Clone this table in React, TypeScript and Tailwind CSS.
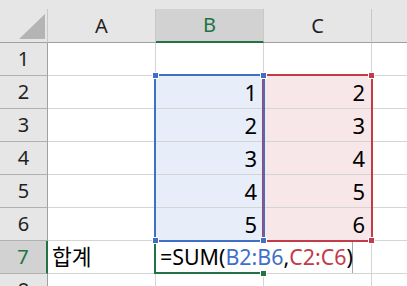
import React from 'react';

const cols = ['A', 'B', 'C'];
const rowNums = [1, 2, 3, 4, 5, 6, 7, 8];

const colB: Record<number, number> = { 2: 1, 3: 2, 4: 3, 5: 4, 6: 5 };
const colC: Record<number, number> = { 2: 2, 3: 3, 4: 4, 5: 5, 6: 6 };

const Handle = ({ x, y, color }: { x: number; y: number; color: string }) => (
  <div
    className="absolute h-[7px] w-[7px] border border-white"
    style={{ left: x, top: y, backgroundColor: color }}
  />
);

const App: React.FC = () => {
  return (
    <div
      className="relative h-[286px] w-[407px] overflow-hidden bg-white text-black"
      style={{ fontFamily: '"Noto Sans", "Noto Sans CJK KR", sans-serif' }}
    >
      <div className="h-[9px] bg-[#e6e6e6]" />

      {/* column headers */}
      <div className="flex h-[34px] bg-[#e6e6e6] text-[20px] text-[#1f1f1f]">
        <div className="flex w-[48px] shrink-0 items-end justify-end border-r border-b border-r-[#c8c8c8] border-b-[#a0a0a0] pr-[2px] pb-[3px]">
          <svg width="26" height="25" viewBox="0 0 26 25">
            <polygon points="0,25 26,25 26,0" fill="#b4b4b4" />
          </svg>
        </div>
        {cols.map((c) =>
          c === 'B' ? (
            <div
              key={c}
              className="flex w-[108px] shrink-0 items-center justify-center border-r border-b-2 border-r-[#c8c8c8] border-b-[#217346] bg-[#d2d2d2] text-[#217346]"
            >
              {c}
            </div>
          ) : (
            <div
              key={c}
              className="flex w-[108px] shrink-0 items-center justify-center border-r border-b border-r-[#c8c8c8] border-b-[#a0a0a0]"
            >
              {c}
            </div>
          )
        )}
        <div className="flex-1 border-b border-b-[#a0a0a0]" />
      </div>

      {/* grid rows */}
      {rowNums.map((r) => {
        const active = r === 7;
        const inRange = r >= 2 && r <= 6;
        return (
          <div key={r} className="flex h-[33px]">
            <div
              className={
                active
                  ? 'flex w-[48px] shrink-0 items-center justify-center border-r-2 border-b border-r-[#217346] border-b-[#b0b0b0] bg-[#d2d2d2] text-[20px] text-[#217346]'
                  : 'flex w-[48px] shrink-0 items-center justify-center border-r border-b border-r-[#a0a0a0] border-b-[#b0b0b0] bg-[#e6e6e6] text-[20px] text-[#1f1f1f]'
              }
            >
              {r}
            </div>
            <div className="flex w-[108px] shrink-0 items-center border-r border-b border-[#d4d4d4] pl-[4px] text-[21.5px]">
              {active ? '합계' : ''}
            </div>
            <div
              className={
                inRange
                  ? 'flex w-[108px] shrink-0 items-center justify-end border-r border-b border-[#d4d4d4] bg-[#e8eef9] pr-[6px] text-[22px]'
                  : 'flex w-[108px] shrink-0 items-center justify-end border-r border-b border-[#d4d4d4] pr-[6px] text-[22px]'
              }
            >
              {colB[r] ?? ''}
            </div>
            <div
              className={
                inRange
                  ? 'flex w-[108px] shrink-0 items-center justify-end border-r border-b border-[#d4d4d4] bg-[#f8e7e8] pr-[6px] text-[22px]'
                  : 'flex w-[108px] shrink-0 items-center justify-end border-r border-b border-[#d4d4d4] pr-[6px] text-[22px]'
              }
            >
              {colC[r] ?? ''}
            </div>
            <div className="flex-1 border-b border-[#d4d4d4]" />
          </div>
        );
      })}

      {/* formula being edited in B7 */}
      <div className="absolute top-[241px] left-[156px] flex h-[32px] w-[197px] items-center border-r border-[#a6a6a6] bg-white pl-[4px] text-[21.4px] whitespace-nowrap">
        <span>=SUM(</span>
        <span className="text-[#3f6fc6]">B2:B6</span>
        <span>,</span>
        <span className="text-[#c33a48]">C2:C6</span>
        <span>)</span>
      </div>

      {/* active cell */}
      <div className="absolute top-[240px] left-[154px] h-[34px] w-[111px] border-t-2 border-b-2 border-l-2 border-[#217346]" />
      <div className="absolute top-[270px] left-[260px] h-[7px] w-[7px] border border-white bg-[#217346]" />

      {/* referenced ranges */}
      <div className="absolute top-[74px] left-[262px] h-[168px] w-[111px] border-2 border-[#c33a48]" />
      <div className="absolute top-[74px] left-[154px] h-[168px] w-[111px] border-2 border-[#3f6fc6]" />

      <Handle x={368} y={72} color="#c33a48" />
      <Handle x={368} y={237} color="#c33a48" />
      <Handle x={152} y={72} color="#3f6fc6" />
      <Handle x={260} y={72} color="#3f6fc6" />
      <Handle x={152} y={237} color="#3f6fc6" />
      <Handle x={260} y={237} color="#3f6fc6" />
    </div>
  );
};

export default App;
